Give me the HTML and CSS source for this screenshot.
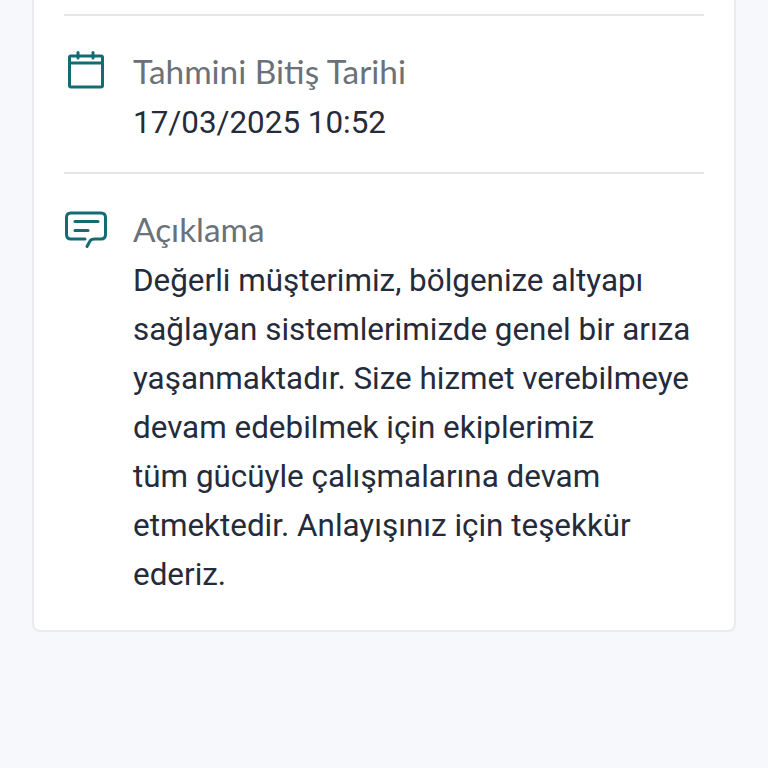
FILE: index.html
```html
<!DOCTYPE html>
<html lang="en">
<head>
    <meta charset="UTF-8">
    <meta name="viewport" content="width=device-width, initial-scale=1.0">
    <title>Arıza Detayı</title>
    <link rel="stylesheet" href="styles.css">
</head>
<body>
    <div class="card">
        <div class="row">
            <svg class="icon" width="44" height="44" viewBox="0 0 44 44" fill="none" stroke="#146c72" stroke-width="3" stroke-linecap="round" stroke-linejoin="round">
                <rect x="5.500" y="9" width="33" height="31" rx="1.500"/>
                <path d="M5.500 16H38.500"/>
                <path d="M14 5.500V11"/>
                <path d="M29 5.500V11"/>
            </svg>
            <div class="info">
                <div class="label">Tahmini Bitiş Tarihi</div>
                <div class="value">17/03/2025 10:52</div>
            </div>
        </div>
        <div class="row">
            <svg class="icon" width="44" height="44" viewBox="0 0 44 44" fill="none" stroke="#146c72" stroke-width="3" stroke-linecap="round" stroke-linejoin="round">
                <path d="M21 34H7Q2.500 34 2.500 29.500V12.500Q2.500 8 7 8H37Q41.500 8 41.500 12.500V29.500Q41.500 34 37 34H31Q27 34 26 36L23 41.500"/>
                <path d="M11 16.500H34"/>
                <path d="M11 25.500H24"/>
            </svg>
            <div class="info">
                <div class="label">Açıklama</div>
                <div class="value">Değerli müşterimiz, bölgenize altyapı sağlayan sistemlerimizde genel bir arıza yaşanmaktadır. Size hizmet verebilmeye devam edebilmek için ekiplerimiz<br>tüm gücüyle çalışmalarına devam etmektedir. Anlayışınız için teşekkür ederiz.</div>
            </div>
        </div>
    </div>
</body>
</html>
```

FILE: styles.css
```css
body {
    margin: 0;
    height: 768px;
    overflow: hidden;
    background-color: #f7f8fb;
    font-family: Roboto, sans-serif;
}

.card {
    box-sizing: border-box;
    width: 704px;
    margin: -21px 0 0 32px;
    padding: 0 30px 31px 30px;
    background-color: #fff;
    border: 2px solid #e9ebee;
    border-radius: 8px;
}

.row {
    display: flex;
    gap: 25px;
    padding-top: 27.500px;
    border-top: 2px solid #e4e6e9;
}

.row:first-child {
    margin-top: 33px;
    padding-bottom: 25.500px;
}

.icon {
    flex-shrink: 0;
    margin-top: 3.800px;
}

.info {
    flex: 1;
}

.label {
    font-family: Lato, sans-serif;
    font-size: 33.400px;
    line-height: 54px;
    color: #6b7178;
}

.value {
    font-size: 31.400px;
    line-height: 49px;
    color: #252b3a;
}
```
